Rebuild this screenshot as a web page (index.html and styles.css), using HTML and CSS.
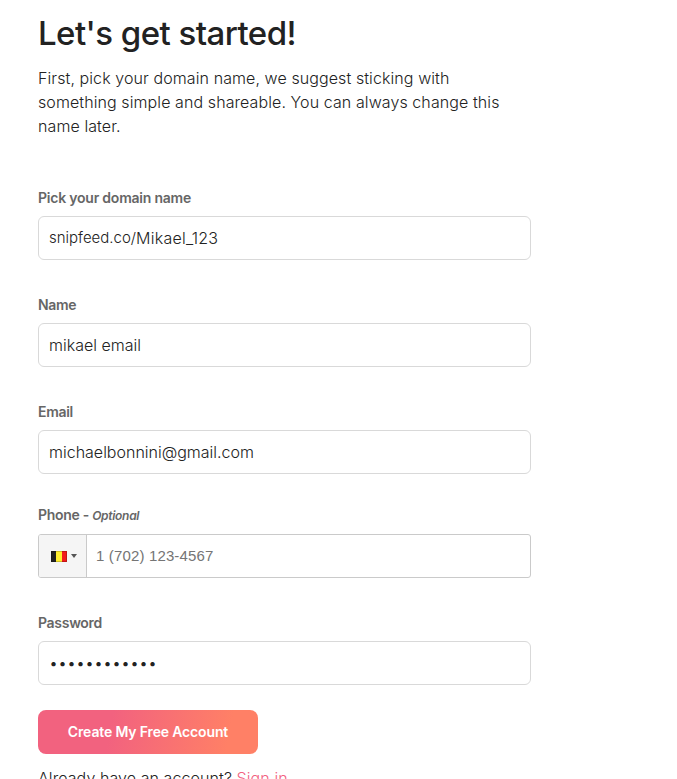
FILE: index.html
```html
<!DOCTYPE html>
<html lang="en">
<head>
    <meta charset="UTF-8">
    <meta name="viewport" content="width=device-width, initial-scale=1.0">
    <title>Sign up</title>
    <link rel="stylesheet" href="styles.css">
</head>
<body>
    <main class="signup">
        <h1>Let's get started!</h1>
        <p class="intro">First, pick your domain name, we suggest sticking with something simple and shareable. You can always change this name later.</p>

        <form>
            <div class="field field-domain">
                <label for="domain">Pick your domain name</label>
                <div class="input-box">
                    <span class="prefix">snipfeed.co/</span>
                    <input type="text" id="domain" value="Mikael_123">
                </div>
            </div>
            <div class="field">
                <label for="name">Name</label>
                <div class="input-box">
                    <input type="text" id="name" value="mikael email">
                </div>
            </div>
            <div class="field field-email">
                <label for="email">Email</label>
                <div class="input-box">
                    <input type="email" id="email" value="michaelbonnini@gmail.com">
                </div>
            </div>
            <div class="field field-phone">
                <label for="phone">Phone <span>-</span> <em>Optional</em></label>
                <div class="phone-box">
                    <div class="country">
                        <span class="flag"></span>
                        <span class="arrow"></span>
                    </div>
                    <input type="tel" id="phone" placeholder="1 (702) 123-4567">
                </div>
            </div>
            <div class="field field-password">
                <label for="password">Password</label>
                <div class="input-box">
                    <input type="password" id="password" value="abcdefghijkl">
                </div>
            </div>
            <button type="submit">Create My Free Account</button>
        </form>
        <p class="signin">Already have an account? <a href="#">Sign in</a></p>
    </main>
</body>
</html>
```
FILE: styles.css
```css
* {
    box-sizing: border-box;
}
body {
    margin: 0;
    height: 779px;
    overflow: hidden;
    background: #fff;
    color: #222;
    font-family: Inter, sans-serif;
    font-size: 16px;
    font-weight: 300;
    line-height: 24px;
}
.signup {
    width: 493px;
    margin-left: 38px;
    padding-top: 13px;
}
h1 {
    margin: 0 0 13px;
    font-size: 33px;
    font-weight: 500;
    line-height: 40px;
    letter-spacing: -0.55px;
}
.intro {
    max-width: 480px;
    margin: 0 0 48px;
    letter-spacing: 0.09px;
}
.field {
    margin-bottom: 33px;
}
.field-email {
    margin-bottom: 29px;
}
.field-password {
    margin-bottom: 25px;
}
label {
    display: block;
    height: 24px;
    margin-bottom: 6px;
    color: #666;
    font-size: 14px;
    font-weight: 600;
    letter-spacing: -0.3px;
}
.field-domain label {
    letter-spacing: -0.22px;
}
.field-phone label {
    margin-bottom: 7px;
}
label em {
    font-size: 12px;
}
.input-box {
    display: flex;
    align-items: center;
    height: 44px;
    padding: 0 10px;
    border: 1px solid #d9d9d9;
    border-radius: 6px;
}
.prefix {
    font-size: 15px;
}
input {
    flex: 1;
    min-width: 0;
    padding: 0;
    border: none;
    outline: none;
    background: none;
    color: #222;
    font: inherit;
}
#domain {
    letter-spacing: 0.25px;
}
.phone-box {
    display: flex;
    height: 44px;
    border: 1px solid #cacaca;
    border-radius: 3px;
    overflow: hidden;
}
.country {
    display: flex;
    align-items: center;
    width: 48px;
    padding-left: 12px;
    border-right: 1px solid #cacaca;
    background: #f5f5f5;
}
.flag {
    width: 16px;
    height: 11px;
    border: 1px solid rgba(0, 0, 0, 0.2);
    background: linear-gradient(90deg, #222 0 33%, #ffee30 33% 68%, #f21c1c 68%) border-box;
}
.arrow {
    margin-left: 4px;
    border-left: 3px solid transparent;
    border-right: 3px solid transparent;
    border-top: 4px solid #555;
}
#phone {
    padding-left: 9px;
    font-family: "Liberation Sans", Arial, sans-serif;
    font-size: 15px;
    font-weight: 400;
    letter-spacing: 0.15px;
}
#phone::placeholder {
    color: #757575;
}
button {
    display: block;
    width: 220px;
    height: 44px;
    padding: 0 0 2px;
    border: none;
    border-radius: 8px;
    background: linear-gradient(100deg, #f2627f 33%, #ff8066 86%);
    color: #fff;
    font: 600 14px Inter, sans-serif;
    letter-spacing: -0.15px;
    cursor: pointer;
}
.signin {
    margin: 12px 0 0;
    letter-spacing: 0.08px;
}
.signin a {
    color: #f2627f;
    text-decoration: none;
}
```
